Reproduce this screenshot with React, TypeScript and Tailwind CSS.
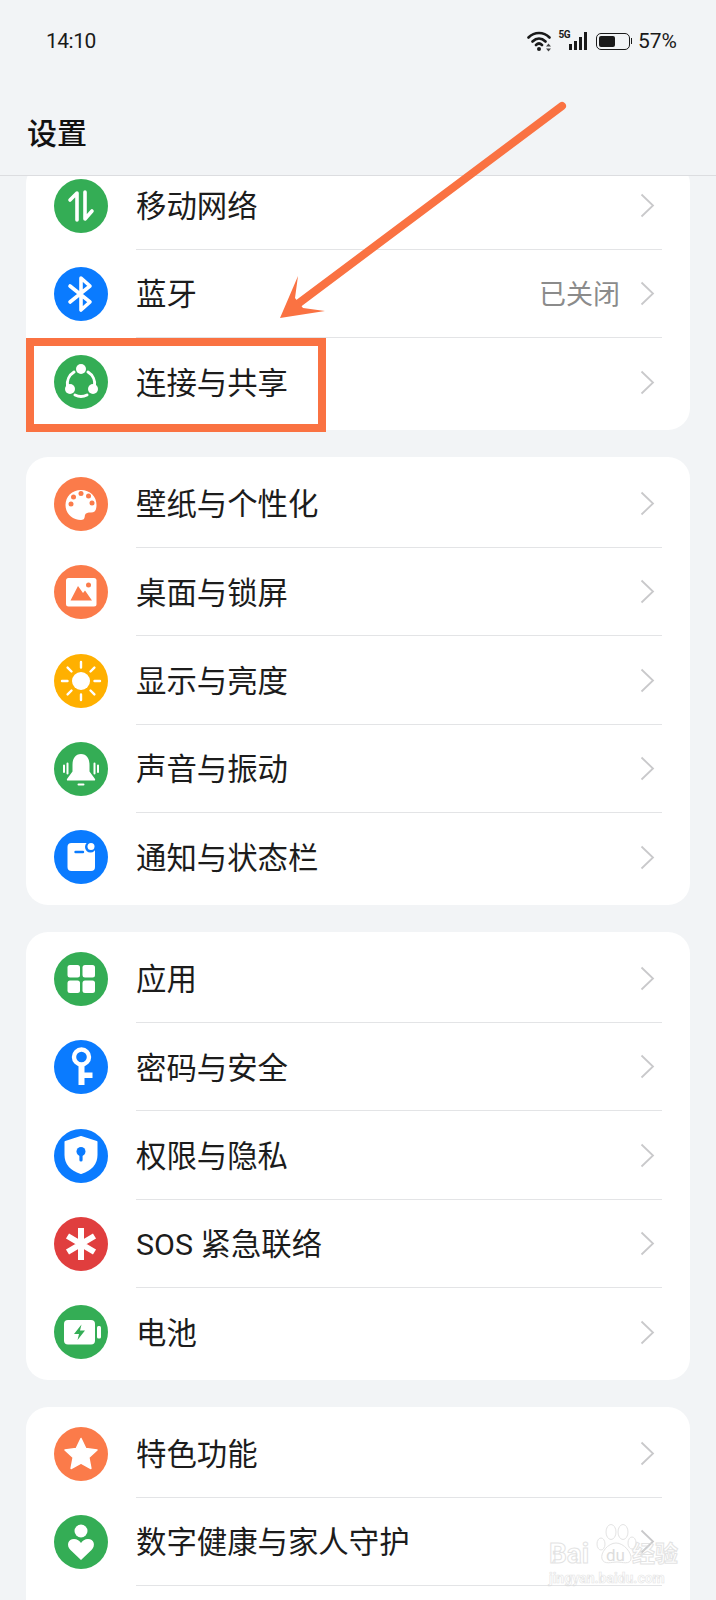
import React from "react";

const green = "#34ad55";
const blue = "#0a7bff";
const orange = "#fb7b4a";
const yellow = "#ffb000";
const red = "#e03e3e";

function Circle({ color, children }: { color: string; children: React.ReactNode }) {
  return (
    <svg width="54" height="54" viewBox="0 0 54 54" className="shrink-0">
      <circle cx="27" cy="27" r="27" fill={color} />
      {children}
    </svg>
  );
}

const MobileIcon = () => (
  <Circle color={green}>
    <path d="M23 41V14L16 21M31 13V40L38 32" fill="none" stroke="#fff" strokeWidth="3.6" strokeLinecap="round" strokeLinejoin="round" />
  </Circle>
);

const BluetoothIcon = () => (
  <Circle color={blue}>
    <path d="M16 19L36 35L27 43V11L36 19L16 35" fill="none" stroke="#fff" strokeWidth="3.6" strokeLinecap="round" strokeLinejoin="round" />
  </Circle>
);

const ShareIcon = () => (
  <Circle color={green}>
    <path d="M20 17A14 14 0 0 0 13.5 31M21 40A14 14 0 0 0 33 40M34 17A14 14 0 0 1 40.5 31" fill="none" stroke="#fff" strokeWidth="3" strokeLinecap="round" />
    <circle cx="27" cy="14" r="5" fill="#fff" />
    <circle cx="16" cy="34" r="5" fill="#fff" />
    <circle cx="39" cy="34" r="5" fill="#fff" />
  </Circle>
);

const PaletteIcon = () => (
  <Circle color={orange}>
    <path d="M27 13C18 13 11.500 19.500 11.500 28C11.500 36.500 18 43 27 43C31 43 30.500 40 31 38C31.500 36 34 35.500 37 35.500C41 35.500 42.500 33 42.500 28C42.500 19.500 36 13 27 13Z" fill="#fff" />
    <circle cx="17" cy="27" r="2.500" fill={orange} />
    <circle cx="19.500" cy="20" r="2.500" fill={orange} />
    <circle cx="27" cy="16.500" r="2.500" fill={orange} />
    <circle cx="34.500" cy="19" r="2.500" fill={orange} />
    <circle cx="38" cy="26" r="2.500" fill={orange} />
  </Circle>
);

const WallpaperIcon = () => (
  <Circle color={orange}>
    <rect x="12" y="13" width="30.500" height="28.500" rx="2.500" fill="#fff" />
    <path d="M16.500 35.500L24 21L29 28L31 25.500L38 35.500Z" fill={orange} />
    <circle cx="34.500" cy="20" r="2.500" fill={orange} />
  </Circle>
);

const SunIcon = () => (
  <Circle color={yellow}>
    <circle cx="27" cy="27" r="9" fill="#fff" />
    <path d="M27 8V13.500M27 40.500V46M8 27H13.500M40.500 27H46M13.600 13.600L17.500 17.500M36.500 36.500L40.400 40.400M13.600 40.400L17.500 36.500M36.500 17.500L40.400 13.600" stroke="#fff" strokeWidth="2.400" strokeLinecap="round" />
  </Circle>
);

const BellIcon = () => (
  <Circle color={green}>
    <path d="M27 12C21 12 18.500 17 18.500 23V29.500L13 37Q12.500 38.500 14 38.500H40Q41.500 38.500 41 37L35.500 29.500V23C35.500 17 33 12 27 12Z" fill="#fff" />
    <path d="M24.500 42.500H29.500M10 23.500V30M13.500 21.500V31.500M44 23.500V30M40.500 21.500V31.500" stroke="#fff" strokeWidth="2" strokeLinecap="round" />
  </Circle>
);

const NoticeIcon = () => (
  <Circle color={blue}>
    <rect x="13.500" y="13" width="27.500" height="28" rx="4" fill="#fff" />
    <circle cx="36.500" cy="17" r="5.500" fill={blue} />
    <circle cx="37" cy="16.500" r="3.500" fill="#fff" />
    <path d="M21.500 22H29" stroke={blue} strokeWidth="2.400" strokeLinecap="round" />
  </Circle>
);

const AppsIcon = () => (
  <Circle color={green}>
    <rect x="13.500" y="13" width="12.500" height="12.500" rx="2.500" fill="#fff" />
    <rect x="28.500" y="13" width="12.500" height="12.500" rx="2.500" fill="#fff" />
    <rect x="13.500" y="28.500" width="12.500" height="12.500" rx="2.500" fill="#fff" />
    <rect x="28.500" y="28.500" width="12.500" height="12.500" rx="2.500" fill="#fff" />
  </Circle>
);

const KeyIcon = () => (
  <Circle color={blue}>
    <circle cx="27.500" cy="17" r="7.500" fill="none" stroke="#fff" strokeWidth="4.400" />
    <path d="M24.500 24H30.500V32.500H38.500V38H30.500V45H24.500Z" fill="#fff" />
  </Circle>
);

const ShieldIcon = () => (
  <Circle color={blue}>
    <path d="M27 8L42.500 13V26C42.500 35 36 41 27 44C18 41 11.500 35 11.500 26V13Z" fill="#fff" stroke="#fff" strokeWidth="2" strokeLinejoin="round" />
    <circle cx="27" cy="22.500" r="4.500" fill={blue} />
    <path d="M27 24V31" stroke={blue} strokeWidth="3.200" strokeLinecap="round" />
  </Circle>
);

const SosIcon = () => (
  <Circle color={red}>
    <path d="M27 11V43M13.500 19L40.500 35M40.500 19L13.500 35" stroke="#fff" strokeWidth="6" />
  </Circle>
);

const BatteryIcon = () => (
  <Circle color={green}>
    <rect x="10" y="15" width="31" height="24.500" rx="4" fill="#fff" />
    <rect x="43" y="21" width="4" height="12.500" rx="1.500" fill="#fff" />
    <path d="M27.500 19.500L20 29H25L23.500 35L31 25.500H26Z" fill={green} />
  </Circle>
);

const StarIcon = () => (
  <Circle color={orange}>
    <path d="M27 11.500L31.800 21.500L43 23L34.800 30.500L36.900 41.500L27 36.200L17.100 41.500L19.200 30.500L11 23L22.200 21.500Z" fill="#fff" stroke="#fff" strokeWidth="1.500" strokeLinejoin="round" />
  </Circle>
);

const HealthIcon = () => (
  <Circle color={green}>
    <circle cx="27" cy="16" r="6.500" fill="#fff" />
    <path d="M27 45L16.500 35C12 30.500 14 24 20 24C23 24 25.800 25.800 27 28C28.200 25.800 31 24 34 24C40 24 42 30.500 37.500 35Z" fill="#fff" />
  </Circle>
);

function Chevron() {
  return (
    <svg width="15" height="25" viewBox="0 0 15 25" className="shrink-0">
      <path d="M1.500 1.500L13 12.500L1.500 23.500" fill="none" stroke="#c9c9cb" strokeWidth="1.800" />
    </svg>
  );
}

function Row({ icon, label, value, last }: { icon: React.ReactNode; label: string; value?: string; last?: boolean }) {
  return (
    <div className="flex items-center pl-[28px] pr-[28px]">
      {icon}
      <div className={"ml-[28px] flex h-[88.4px] flex-1 items-center justify-between pr-[7px] " + (last ? "" : "border-b border-[#e3e4e6]")}>
        <span className="pt-[4px] text-[30.4px] leading-none text-[#1c1c1c]">{label}</span>
        <span className="flex items-center gap-[20px]">
          {value && <span className="pt-[4px] text-[27px] leading-none text-[#8b8b8b]">{value}</span>}
          <Chevron />
        </span>
      </div>
    </div>
  );
}

function StatusIcons() {
  return (
    <div className="flex items-center">
      <svg width="26" height="24" viewBox="0 0 26 24">
        <path d="M1.500 8.500C7.500 2.500 16.500 2.500 22.500 8.500M5.500 12.500C9.500 8.500 14.500 8.500 18.500 12.500M9 16C11 14 13 14 15 16" fill="none" stroke="#1a1a1a" strokeWidth="2.600" strokeLinecap="round" />
        <circle cx="12" cy="20" r="2" fill="#1a1a1a" />
        <path d="M19 17.500L21.500 14.500L24 17.500ZM19 19.500L21.500 22.500L24 19.500Z" fill="#444" />
      </svg>
      <div className="relative ml-[6px] h-[18px] w-[28px]">
        <span className="absolute left-0 top-[-2px] text-[10px] font-bold leading-none tracking-tighter text-[#1a1a1a]">5G</span>
        <div className="absolute bottom-0 right-0 flex items-end gap-[2px]">
          <div className="h-[6px] w-[3px] bg-[#1a1a1a]" />
          <div className="h-[9px] w-[3px] bg-[#1a1a1a]" />
          <div className="h-[13px] w-[3px] bg-[#1a1a1a]" />
          <div className="h-[18px] w-[3px] bg-[#1a1a1a]" />
        </div>
      </div>
      <div className="ml-[9px] flex h-[17px] w-[34px] items-center rounded-[5px] border-[1.5px] border-[#1a1a1a] p-[2px]">
        <div className="h-full w-[16px] rounded-[2px] bg-[#1a1a1a]" />
      </div>
      <div className="ml-[1px] h-[6px] w-[1.5px] bg-[#1a1a1a]" />
      <span className="ml-[6px] text-[21px] leading-none text-[#1a1a1a]">57%</span>
    </div>
  );
}

function Watermark() {
  return (
    <div className="absolute left-[549px] top-[1523px] h-[62px] w-[130px] opacity-70">
      <svg width="46" height="42" viewBox="0 0 46 42" className="absolute left-[44px] top-0">
        <g fill="#fff" stroke="#d9d9d9" strokeWidth="1">
          <ellipse cx="8" cy="21" rx="4" ry="6" />
          <ellipse cx="18" cy="9" rx="5" ry="7.500" />
          <ellipse cx="30" cy="9" rx="5" ry="7.500" />
          <ellipse cx="39" cy="20" rx="4" ry="6" />
          <path d="M23 20C15 20 7 30 9 36C11 42 19 39 24 39C29 39 37 42 38 36C39 30 31 20 23 20Z" />
        </g>
      </svg>
      <span className="absolute left-0 top-[17px] text-[28px] font-bold leading-none text-transparent [-webkit-text-stroke:1px_#d8d8d8]">Bai</span>
      <span className="absolute left-[57px] top-[24px] text-[17px] leading-none text-[#d0d0d0]">du</span>
      <span className="absolute left-[83px] top-[20px] text-[23px] font-bold leading-none text-transparent [-webkit-text-stroke:1px_#d8d8d8]">经验</span>
      <span className="absolute left-0 top-[48px] text-[14px] font-bold leading-none text-transparent [-webkit-text-stroke:0.6px_#d8d8d8]">jingyan.baidu.com</span>
    </div>
  );
}

export default function App() {
  return (
    <div className="relative h-[1600px] overflow-hidden bg-[#f2f4f6] font-['Roboto','Noto_Sans_CJK_SC',sans-serif]">
      <header className="relative z-10 h-[176px] border-b border-[#dcdde0] bg-[#f2f4f6]">
        <div className="flex items-center justify-between pl-[46px] pr-[39px] pt-[29px]">
          <span className="text-[21px] leading-[24px] tracking-[-0.5px] text-[#1a1a1a]">14:10</span>
          <StatusIcons />
        </div>
        <h1 className="ml-[27px] mt-[66px] text-[30px] font-medium leading-none text-[#111]">设置</h1>
      </header>

      <main className="-mt-[14.5px] flex flex-col gap-[27px] px-[26px]">
        <section className="rounded-[22px] bg-white pb-[3px]">
          <Row icon={<MobileIcon />} label="移动网络" />
          <Row icon={<BluetoothIcon />} label="蓝牙" value="已关闭" />
          <Row icon={<ShareIcon />} label="连接与共享" last />
        </section>

        <section className="rounded-[22px] bg-white py-[3px]">
          <Row icon={<PaletteIcon />} label="壁纸与个性化" />
          <Row icon={<WallpaperIcon />} label="桌面与锁屏" />
          <Row icon={<SunIcon />} label="显示与亮度" />
          <Row icon={<BellIcon />} label="声音与振动" />
          <Row icon={<NoticeIcon />} label="通知与状态栏" last />
        </section>

        <section className="rounded-[22px] bg-white py-[3px]">
          <Row icon={<AppsIcon />} label="应用" />
          <Row icon={<KeyIcon />} label="密码与安全" />
          <Row icon={<ShieldIcon />} label="权限与隐私" />
          <Row icon={<SosIcon />} label="SOS 紧急联络" />
          <Row icon={<BatteryIcon />} label="电池" last />
        </section>

        <section className="rounded-[22px] bg-white py-[3px]">
          <Row icon={<StarIcon />} label="特色功能" />
          <Row icon={<HealthIcon />} label="数字健康与家人守护" />
          <div className="h-[88px]" />
        </section>
      </main>

      {/* annotation drawn over the screenshot */}
      <div className="absolute left-[26px] top-[338px] z-20 h-[94px] w-[300px] border-[8.5px] border-[#fa7242]" />
      <svg width="716" height="340" viewBox="0 0 716 340" className="absolute left-0 top-0 z-20">
        <path d="M562 106L299 303" fill="none" stroke="#fa7242" strokeWidth="8" strokeLinecap="round" />
        <path d="M280 318L298 276L295 298L303 308L325 311Z" fill="#fa7242" />
      </svg>

      <Watermark />
    </div>
  );
}
